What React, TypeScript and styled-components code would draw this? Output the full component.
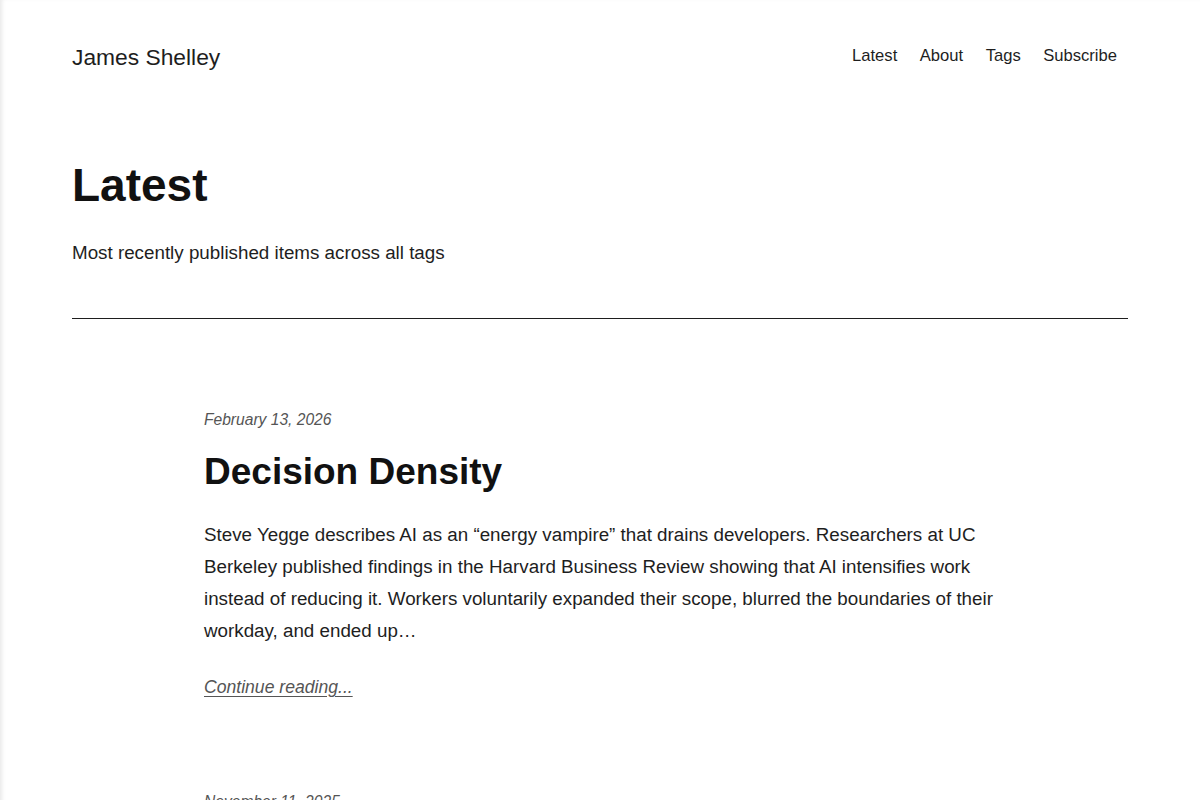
import React from "react";
import styled, { createGlobalStyle } from "styled-components";

const GlobalStyle = createGlobalStyle`
  html, body {
    margin: 0;
    padding: 0;
    background: #fff;
  }
  body {
    font-family: "Liberation Sans", Arial, sans-serif;
    color: #1e1e1e;
    box-shadow: inset 4px 0 4px -2px rgba(0, 0, 0, 0.09);
    min-height: 100vh;
  }
`;

const Page = styled.div`
  padding: 0 72px;
`;

const Header = styled.header`
  display: flex;
  justify-content: space-between;
  align-items: center;
  padding-top: 41px;
  height: 30px;
`;

const SiteTitle = styled.a`
  font-size: 22.8px;
  color: #1e1e1e;
  text-decoration: none;
  margin-top: 2px;
`;

const Nav = styled.nav`
  display: flex;
  gap: 22.5px;
  margin-right: 11px;
  font-size: 16.6px;

  a {
    color: #1e1e1e;
    text-decoration: none;
  }
`;

const Intro = styled.section`
  padding-top: 86px;
  padding-bottom: 52px;
  border-bottom: 1px solid #1e1e1e;
`;

const PageTitle = styled.h1`
  margin: 0;
  font-size: 46px;
  line-height: 56px;
  font-weight: 700;
  color: #111;
`;

const Lead = styled.p`
  margin: 27px 0 0;
  font-size: 18.8px;
  line-height: 26px;
`;

const Feed = styled.main`
  max-width: 800px;
  padding-left: 132px;
  padding-top: 91px;
`;

const Post = styled.article`
  margin-bottom: 94px;
`;

const PostDate = styled.time`
  display: block;
  font-size: 15.6px;
  font-style: italic;
  line-height: 20px;
  color: #555;
`;

const PostTitle = styled.h2`
  margin: 20px 0 0;
  font-size: 37px;
  line-height: 44px;
  font-weight: 700;
  color: #111;
`;

const Excerpt = styled.p`
  margin: 25px 0 0;
  font-size: 18.8px;
  line-height: 32px;
`;

const More = styled.a`
  display: inline-block;
  margin-top: 30px;
  font-size: 17.6px;
  font-style: italic;
  color: #555;
  text-decoration: underline;
  text-underline-offset: 3px;
`;

const posts = [
  {
    date: "February 13, 2026",
    title: "Decision Density",
    excerpt:
      "Steve Yegge describes AI as an \u201cenergy vampire\u201d that drains developers. Researchers at UC Berkeley published findings in the Harvard Business Review showing that AI intensifies work instead of reducing it. Workers voluntarily expanded their scope, blurred the boundaries of their workday, and ended up\u2026",
  },
  {
    date: "November 11, 2025",
    title: "Notes",
    excerpt: "",
  },
];

export default function App() {
  return (
    <>
      <GlobalStyle />
      <Page>
        <Header>
          <SiteTitle href="#">James Shelley</SiteTitle>
          <Nav>
            <a href="#">Latest</a>
            <a href="#">About</a>
            <a href="#">Tags</a>
            <a href="#">Subscribe</a>
          </Nav>
        </Header>
        <Intro>
          <PageTitle>Latest</PageTitle>
          <Lead>Most recently published items across all tags</Lead>
        </Intro>
        <Feed>
          {posts.map((p) => (
            <Post key={p.date}>
              <PostDate>{p.date}</PostDate>
              <PostTitle>{p.title}</PostTitle>
              {p.excerpt && <Excerpt>{p.excerpt}</Excerpt>}
              <More href="#">Continue reading...</More>
            </Post>
          ))}
        </Feed>
      </Page>
    </>
  );
}
